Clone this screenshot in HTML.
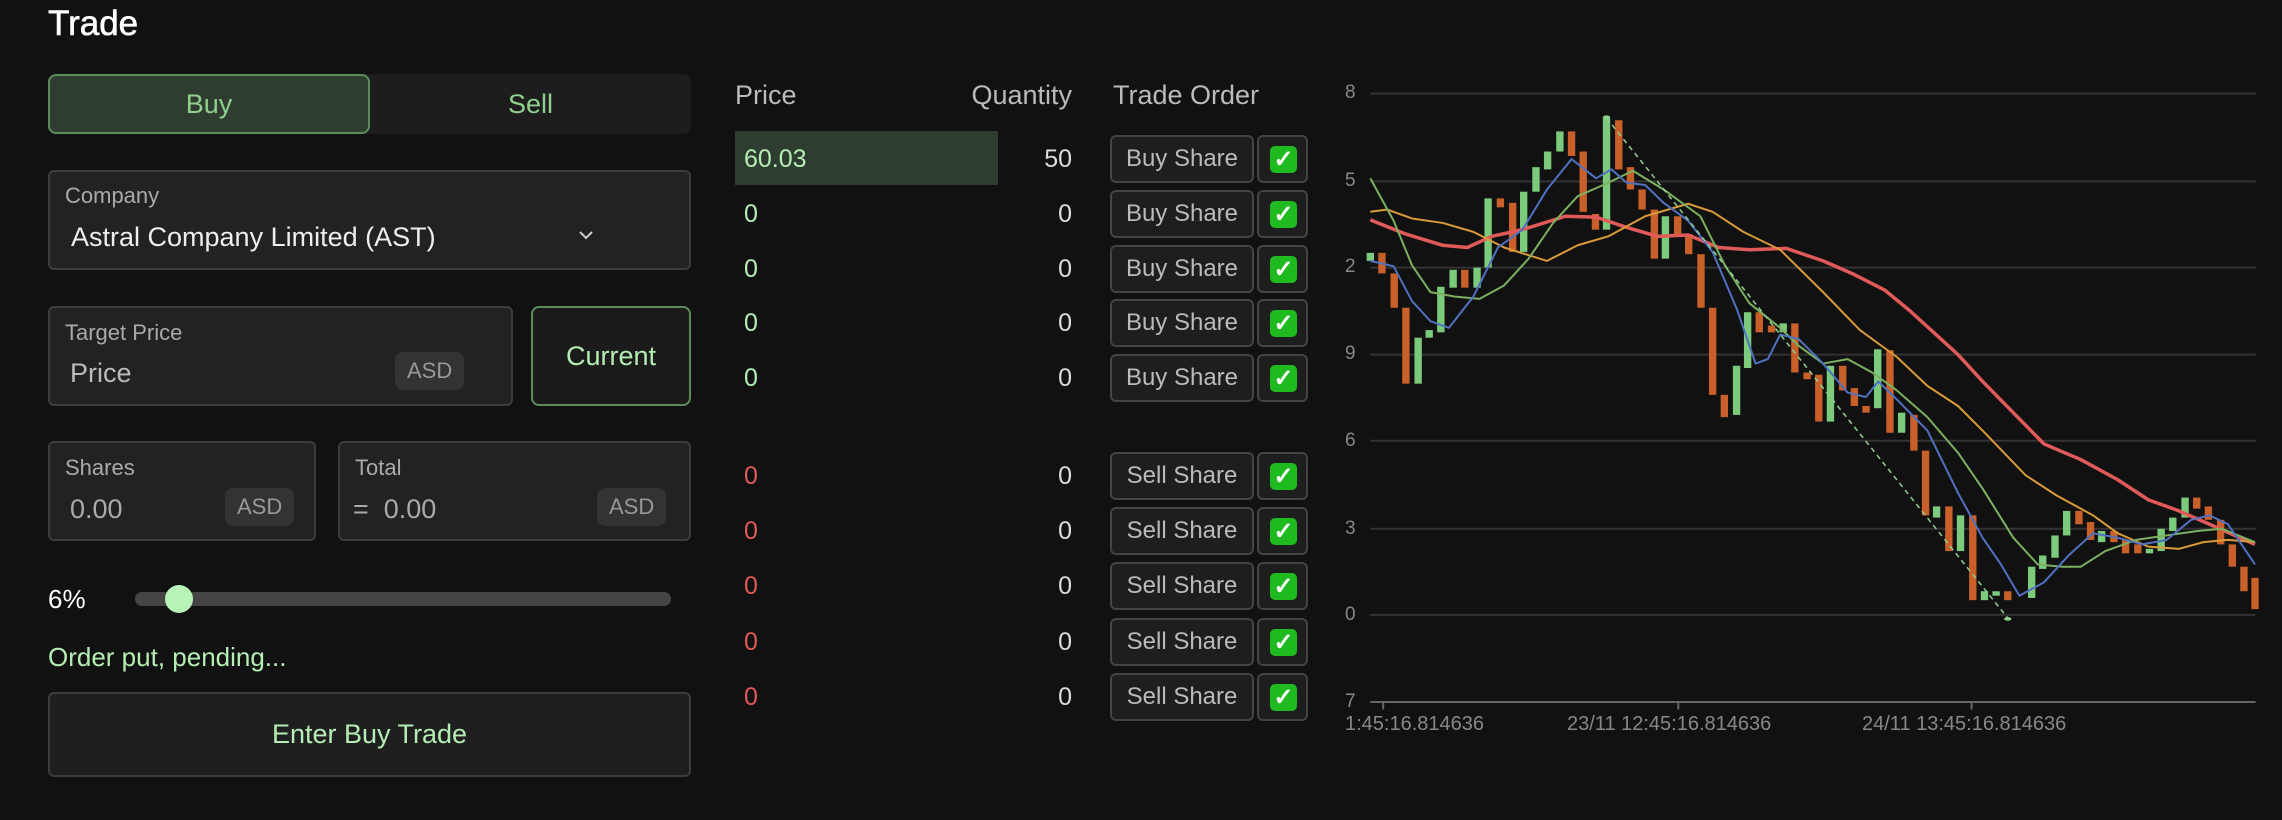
<!DOCTYPE html>
<html><head><meta charset="utf-8"><style>
*{margin:0;padding:0;box-sizing:border-box}
body{width:2282px;height:820px;background:#111111;font-family:"Liberation Sans",sans-serif;position:relative;overflow:hidden;color:#ddd}
.a{position:absolute}
.box{position:absolute;background:#222;border:2px solid #3c3c3c;border-radius:6px}
.lbl{position:absolute;color:#aaa;font-size:22px}
.tag{position:absolute;background:#333;color:#999;font-size:22px;border-radius:8px;padding:6px 12px}
.row{position:absolute;font-size:25px}
.btn{position:absolute;left:1110px;width:144px;height:48px;background:#1e1e1e;border:2px solid #444;border-radius:6px;color:#bbb;font-size:24px;text-align:center;line-height:44px}
.chk{position:absolute;left:1257px;width:51px;height:48px;background:#1e1e1e;border:2px solid #444;border-radius:6px}
.chk i{position:absolute;left:11px;top:9px;width:27px;height:27px;background:#1fba1f;border-radius:5px;color:#fff;font-style:normal;font-size:24px;font-weight:bold;text-align:center;line-height:27px}
.yl{position:absolute;left:1345px;color:#888;font-size:19px}
</style></head><body>
<div class="a" style="left:48px;top:4px;font-size:35px;color:#fff;-webkit-text-stroke:0.6px #fff">Trade</div>

<div class="a" style="left:48px;top:74px;width:643px;height:60px;background:#1d1d1d;border-radius:8px"></div>
<div class="a" style="left:48px;top:74px;width:322px;height:60px;background:#2f3d30;border:2px solid #5b8a5b;border-radius:8px;color:#8fd08f;font-size:27px;text-align:center;line-height:56px">Buy</div>
<div class="a" style="left:370px;top:74px;width:321px;height:60px;color:#8fd08f;font-size:27px;text-align:center;line-height:60px">Sell</div>

<div class="box" style="left:48px;top:170px;width:643px;height:100px"></div>
<div class="lbl" style="left:65px;top:183px">Company</div>
<div class="a" style="left:71px;top:222px;font-size:27px;color:#eee">Astral Company Limited (AST)</div>
<svg class="a" style="left:578px;top:229px" width="16" height="12"><path d="M2 3 L8 9 L14 3" stroke="#ccc" stroke-width="2" fill="none"/></svg>

<div class="box" style="left:48px;top:306px;width:465px;height:100px"></div>
<div class="lbl" style="left:65px;top:320px">Target Price</div>
<div class="a" style="left:70px;top:358px;font-size:27px;color:#bbb">Price</div>
<div class="tag" style="left:395px;top:352px">ASD</div>
<div class="a" style="left:531px;top:306px;width:160px;height:100px;border:2px solid #5b8a5b;border-radius:8px;background:#1b1b1b;color:#b5eeb5;font-size:27px;text-align:center;line-height:96px">Current</div>

<div class="box" style="left:48px;top:441px;width:268px;height:100px"></div>
<div class="lbl" style="left:65px;top:455px">Shares</div>
<div class="a" style="left:70px;top:494px;font-size:27px;color:#aaa">0.00</div>
<div class="tag" style="left:225px;top:488px">ASD</div>
<div class="box" style="left:338px;top:441px;width:353px;height:100px"></div>
<div class="lbl" style="left:355px;top:455px">Total</div>
<div class="a" style="left:353px;top:494px;font-size:27px;color:#aaa">=&nbsp; 0.00</div>
<div class="tag" style="left:597px;top:488px">ASD</div>

<div class="a" style="left:48px;top:584px;font-size:26px;color:#fff">6%</div>
<div class="a" style="left:135px;top:592px;width:536px;height:14px;background:#444;border-radius:7px"></div>
<div class="a" style="left:165px;top:585px;width:28px;height:28px;background:#b8f4b8;border-radius:50%"></div>

<div class="a" style="left:48px;top:642px;font-size:26px;color:#b5eeb5">Order put, pending...</div>
<div class="box" style="left:48px;top:692px;width:643px;height:85px;background:#1f1f1f"></div>
<div class="a" style="left:48px;top:692px;width:643px;height:85px;text-align:center;line-height:85px;font-size:27px;color:#b5eeb5">Enter Buy Trade</div>

<div class="a" style="left:735px;top:80px;font-size:27px;color:#bbb">Price</div>
<div class="a" style="right:1210px;top:80px;font-size:27px;color:#bbb">Quantity</div>
<div class="a" style="left:1113px;top:80px;font-size:27px;color:#bbb">Trade Order</div>
<div class="a" style="left:735px;top:131px;width:263px;height:54px;background:#2f3d30"></div>

<div class="row" style="left:744px;top:145px;color:#b5eeb5">60.03</div><div class="row" style="right:1210px;top:145px;color:#ddd">50</div>
<div class="row" style="left:744px;top:200px;color:#b5eeb5">0</div><div class="row" style="right:1210px;top:200px;color:#ddd">0</div>
<div class="row" style="left:744px;top:255px;color:#b5eeb5">0</div><div class="row" style="right:1210px;top:255px;color:#ddd">0</div>
<div class="row" style="left:744px;top:309px;color:#b5eeb5">0</div><div class="row" style="right:1210px;top:309px;color:#ddd">0</div>
<div class="row" style="left:744px;top:364px;color:#b5eeb5">0</div><div class="row" style="right:1210px;top:364px;color:#ddd">0</div>
<div class="row" style="left:744px;top:462px;color:#e05a5a">0</div><div class="row" style="right:1210px;top:462px;color:#ddd">0</div>
<div class="row" style="left:744px;top:517px;color:#e05a5a">0</div><div class="row" style="right:1210px;top:517px;color:#ddd">0</div>
<div class="row" style="left:744px;top:572px;color:#e05a5a">0</div><div class="row" style="right:1210px;top:572px;color:#ddd">0</div>
<div class="row" style="left:744px;top:628px;color:#e05a5a">0</div><div class="row" style="right:1210px;top:628px;color:#ddd">0</div>
<div class="row" style="left:744px;top:683px;color:#e05a5a">0</div><div class="row" style="right:1210px;top:683px;color:#ddd">0</div>

<div class="btn" style="top:135px">Buy Share</div><div class="chk" style="top:135px"><i>✓</i></div>
<div class="btn" style="top:190px">Buy Share</div><div class="chk" style="top:190px"><i>✓</i></div>
<div class="btn" style="top:245px">Buy Share</div><div class="chk" style="top:245px"><i>✓</i></div>
<div class="btn" style="top:299px">Buy Share</div><div class="chk" style="top:299px"><i>✓</i></div>
<div class="btn" style="top:354px">Buy Share</div><div class="chk" style="top:354px"><i>✓</i></div>
<div class="btn" style="top:452px">Sell Share</div><div class="chk" style="top:452px"><i>✓</i></div>
<div class="btn" style="top:507px">Sell Share</div><div class="chk" style="top:507px"><i>✓</i></div>
<div class="btn" style="top:562px">Sell Share</div><div class="chk" style="top:562px"><i>✓</i></div>
<div class="btn" style="top:618px">Sell Share</div><div class="chk" style="top:618px"><i>✓</i></div>
<div class="btn" style="top:673px">Sell Share</div><div class="chk" style="top:673px"><i>✓</i></div>

<div class="yl" style="top:82px">8</div>
<div class="yl" style="top:170px">5</div>
<div class="yl" style="top:256px">2</div>
<div class="yl" style="top:343px">9</div>
<div class="yl" style="top:430px">6</div>
<div class="yl" style="top:518px">3</div>
<div class="yl" style="top:604px">0</div>
<div class="yl" style="top:691px">7</div>
<div class="a" style="left:1345px;top:713px;font-size:20px;color:#888">1:45:16.814636</div>
<div class="a" style="left:1567px;top:713px;font-size:20px;color:#888">23/11 12:45:16.814636</div>
<div class="a" style="left:1862px;top:713px;font-size:20px;color:#888">24/11 13:45:16.814636</div>

<svg class="a" style="left:1320px;top:60px" width="962" height="700" viewBox="0 0 1568 1568" preserveAspectRatio="none">
<g stroke="#333" stroke-width="2">
<line x1="82" y1="75" x2="1525" y2="75" vector-effect="non-scaling-stroke"/>
<line x1="82" y1="272" x2="1525" y2="272" vector-effect="non-scaling-stroke"/>
<line x1="82" y1="465" x2="1525" y2="465" vector-effect="non-scaling-stroke"/>
<line x1="82" y1="660" x2="1525" y2="660" vector-effect="non-scaling-stroke"/>
<line x1="82" y1="853" x2="1525" y2="853" vector-effect="non-scaling-stroke"/>
<line x1="82" y1="1050" x2="1525" y2="1050" vector-effect="non-scaling-stroke"/>
<line x1="82" y1="1243" x2="1525" y2="1243" vector-effect="non-scaling-stroke"/>
</g>
<line x1="82" y1="1438" x2="1525" y2="1438" stroke="#666" stroke-width="2" vector-effect="non-scaling-stroke"/>
<g stroke="#666" stroke-width="2"><line x1="103" y1="1438" x2="103" y2="1455" vector-effect="non-scaling-stroke"/><line x1="584" y1="1438" x2="584" y2="1455" vector-effect="non-scaling-stroke"/><line x1="1062" y1="1438" x2="1062" y2="1455" vector-effect="non-scaling-stroke"/></g>
<g fill="#7ccb7c">
<rect x="76" y="432" width="12" height="18"/><rect x="154" y="622" width="12" height="103"/><rect x="172" y="605" width="12" height="17"/><rect x="191" y="508" width="12" height="102"/><rect x="211" y="470" width="12" height="40"/><rect x="250" y="465" width="12" height="45"/><rect x="268" y="310" width="12" height="155"/><rect x="326" y="295" width="12" height="135"/><rect x="346" y="240" width="12" height="55"/><rect x="365" y="205" width="12" height="40"/><rect x="385" y="160" width="12" height="45"/><rect x="461" y="130" width="12" height="250"/><rect x="557" y="350" width="12" height="95"/><rect x="673" y="685" width="12" height="110"/><rect x="691" y="565" width="12" height="125"/><rect x="749" y="590" width="12" height="20"/><rect x="826" y="685" width="12" height="125"/><rect x="903" y="648" width="12" height="132"/><rect x="942" y="790" width="12" height="45"/><rect x="999" y="1000" width="12" height="25"/><rect x="1038" y="1020" width="12" height="80"/><rect x="1077" y="1190" width="12" height="20"/><rect x="1096" y="1190" width="12" height="10"/><rect x="1154" y="1135" width="12" height="70"/><rect x="1172" y="1110" width="12" height="30"/><rect x="1192" y="1065" width="12" height="50"/><rect x="1211" y="1010" width="12" height="55"/><rect x="1268" y="1055" width="12" height="25"/><rect x="1346" y="1095" width="12" height="10"/><rect x="1365" y="1050" width="12" height="50"/><rect x="1384" y="1025" width="12" height="30"/><rect x="1404" y="980" width="12" height="45"/>
</g>
<g fill="#c9602a">
<rect x="95" y="432" width="12" height="46"/><rect x="115" y="478" width="12" height="77"/><rect x="134" y="555" width="12" height="170"/><rect x="230" y="470" width="12" height="40"/><rect x="288" y="310" width="12" height="20"/><rect x="308" y="320" width="12" height="110"/><rect x="404" y="160" width="12" height="55"/><rect x="423" y="205" width="12" height="135"/><rect x="443" y="345" width="12" height="35"/><rect x="481" y="135" width="12" height="110"/><rect x="500" y="240" width="12" height="50"/><rect x="519" y="290" width="12" height="45"/><rect x="539" y="335" width="12" height="110"/><rect x="577" y="350" width="12" height="45"/><rect x="595" y="390" width="12" height="45"/><rect x="615" y="435" width="12" height="120"/><rect x="634" y="555" width="12" height="195"/><rect x="653" y="750" width="12" height="50"/><rect x="710" y="565" width="12" height="45"/><rect x="730" y="595" width="12" height="15"/><rect x="768" y="590" width="12" height="110"/><rect x="788" y="700" width="12" height="15"/><rect x="807" y="705" width="12" height="105"/><rect x="846" y="685" width="12" height="55"/><rect x="865" y="735" width="12" height="40"/><rect x="884" y="775" width="12" height="15"/><rect x="923" y="650" width="12" height="185"/><rect x="962" y="795" width="12" height="80"/><rect x="981" y="875" width="12" height="145"/><rect x="1019" y="1000" width="12" height="100"/><rect x="1058" y="1020" width="12" height="190"/><rect x="1115" y="1190" width="12" height="20"/><rect x="1231" y="1010" width="12" height="30"/><rect x="1250" y="1035" width="12" height="40"/><rect x="1288" y="1055" width="12" height="25"/><rect x="1307" y="1075" width="12" height="30"/><rect x="1327" y="1085" width="12" height="20"/><rect x="1423" y="980" width="12" height="25"/><rect x="1442" y="1000" width="12" height="30"/><rect x="1462" y="1030" width="12" height="55"/><rect x="1481" y="1085" width="12" height="50"/><rect x="1500" y="1135" width="12" height="55"/><rect x="1518" y="1160" width="12" height="70"/>
</g>
<g fill="none" stroke-linejoin="round">
<polyline vector-effect="non-scaling-stroke" stroke="#e05a5a" stroke-width="3.5" points="82,358 140,390 200,415 240,420 280,395 330,380 400,350 450,352 500,375 550,395 600,392 650,420 700,425 760,422 820,450 870,480 920,515 960,560 1000,610 1040,660 1080,720 1130,790 1180,860 1240,895 1300,940 1350,985 1400,1010 1450,1040 1524,1085"/>
<polyline vector-effect="non-scaling-stroke" stroke="#d99a3a" stroke-width="2" points="82,340 110,335 150,355 200,365 250,385 300,420 370,450 420,415 470,395 530,350 600,322 640,340 690,385 750,425 820,520 880,605 940,665 990,730 1040,775 1080,830 1150,930 1200,975 1260,1020 1300,1060 1350,1090 1400,1095 1440,1080 1480,1075 1524,1080"/>
<polyline vector-effect="non-scaling-stroke" stroke="#7bb060" stroke-width="2" points="82,265 120,360 150,460 180,520 220,530 260,535 300,505 340,445 380,365 420,305 470,275 510,248 560,290 620,350 660,460 700,545 750,600 780,640 820,680 860,670 900,700 940,740 990,800 1040,880 1080,960 1130,1070 1170,1130 1210,1135 1240,1135 1280,1100 1330,1075 1380,1065 1430,1055 1470,1050 1524,1080"/>
<polyline vector-effect="non-scaling-stroke" stroke="#5070c0" stroke-width="2" points="82,450 120,462 150,540 180,585 210,600 250,530 290,420 330,380 370,290 410,222 450,265 475,245 500,275 530,280 560,320 600,360 640,430 680,560 710,680 730,670 750,615 780,625 820,680 860,745 890,755 910,720 940,760 990,830 1040,970 1080,1070 1110,1130 1140,1200 1180,1170 1220,1110 1260,1060 1300,1070 1340,1085 1380,1075 1420,1030 1450,1020 1480,1040 1524,1130"/>
<line vector-effect="non-scaling-stroke" x1="467" y1="130" x2="1121" y2="1250" stroke="#8fd08f" stroke-width="1.5" stroke-dasharray="5,4"/>
</g>
<ellipse cx="467" cy="128" rx="6" ry="4" fill="#8fd08f"/><ellipse cx="1121" cy="1252" rx="6" ry="4" fill="#8fd08f"/>
</svg>
</body></html>
